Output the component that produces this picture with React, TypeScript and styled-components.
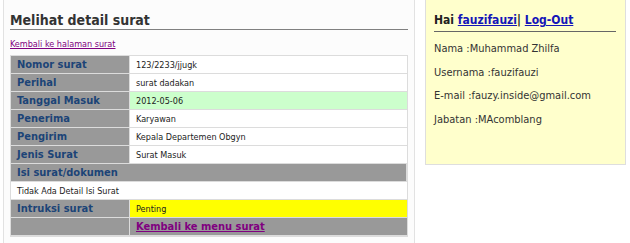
import * as React from 'react';
import styled, { createGlobalStyle } from 'styled-components';

const GlobalStyle = createGlobalStyle`
  html, body {
    margin: 0;
    padding: 0;
    background: #ffffff;
    font-family: "DejaVu Sans Condensed", "DejaVu Sans", sans-serif;
    color: #222;
  }
`;

type Row = { label: string; value: string; tone?: 'plain' | 'green' | 'yellow' };

const topRows: Row[] = [
  { label: 'Nomor surat', value: '123/2233/jjugk' },
  { label: 'Perihal', value: 'surat dadakan' },
  { label: 'Tanggal Masuk', value: '2012-05-06', tone: 'green' },
  { label: 'Penerima', value: 'Karyawan' },
  { label: 'Pengirim', value: 'Kepala Departemen Obgyn' },
  { label: 'Jenis Surat', value: 'Surat Masuk' },
];

const profile = [
  'Nama :Muhammad Zhilfa',
  'Usernama :fauzifauzi',
  'E-mail :fauzy.inside@gmail.com',
  'Jabatan :MAcomblang',
];

function App() {
  return (
    <>
      <GlobalStyle />
      <Page>
        <Main>
          <Title>Melihat detail surat</Title>
          <BackLink href="#">Kembali ke halaman surat</BackLink>
          <DetailTable>
            <tbody>
              {topRows.map((row) => (
                <tr key={row.label}>
                  <LabelCell>{row.label}</LabelCell>
                  <ValueCell $tone={row.tone}>{row.value}</ValueCell>
                </tr>
              ))}
              <tr>
                <LabelCell colSpan={2}>Isi surat/dokumen</LabelCell>
              </tr>
              <tr>
                <ValueCell colSpan={2}>Tidak Ada Detail Isi Surat</ValueCell>
              </tr>
              <tr>
                <LabelCell>Intruksi surat</LabelCell>
                <ValueCell $tone="yellow">Penting</ValueCell>
              </tr>
              <tr>
                <LabelCell />
                <ValueCell $tone="gray">
                  <MenuLink href="#">Kembali ke menu surat</MenuLink>
                </ValueCell>
              </tr>
            </tbody>
          </DetailTable>
        </Main>
        <Sidebar>
          <Greeting>
            Hai <UserLink href="#">fauzifauzi</UserLink>| <UserLink href="#">Log-Out</UserLink>
          </Greeting>
          <InfoList>
            {profile.map((line) => (
              <InfoItem key={line}>{line}</InfoItem>
            ))}
          </InfoList>
        </Sidebar>
      </Page>
    </>
  );
}

const Page = styled.div`
  display: flex;
  align-items: flex-start;
  width: 630px;
  height: 243px;
  overflow: hidden;
`;

const Main = styled.div`
  box-sizing: border-box;
  width: 412px;
  height: 243px;
  margin-left: 3px;
  padding: 12px 6px 0;
  background: #fcfcfc;
  border-left: 1px solid #e2e2e2;
  border-right: 1px solid #e2e2e2;
`;

const Title = styled.h2`
  margin: 0;
  padding-bottom: 0;
  font-size: 14px;
  line-height: 17px;
  font-weight: bold;
  color: #333;
  border-bottom: 1px solid #808080;
`;

const BackLink = styled.a`
  display: block;
  margin-top: 8px;
  font-size: 9px;
  line-height: 12px;
  color: #800080;
  text-decoration: underline;
`;

const DetailTable = styled.table`
  width: 100%;
  margin-top: 5px;
  border-collapse: separate;
  border-spacing: 0;
  background: #dcdcdc;
  border: 1px solid #dcdcdc;

  td {
    height: 17px;
    padding: 0 0 0 6px;
    border-bottom: 1px solid #dcdcdc;
  }
`;

const LabelCell = styled.td`
  width: 112px;
  background: #999999;
  color: #1c4477;
  font-size: 11px;
  font-weight: bold;
  border-right: 1px solid #dcdcdc;
`;

const toneColours = {
  plain: '#ffffff',
  green: '#ccffcc',
  yellow: '#ffff00',
  gray: '#999999',
};

const ValueCell = styled.td<{ $tone?: keyof typeof toneColours }>`
  background: ${(p) => toneColours[p.$tone ?? 'plain']};
  color: #222;
  font-size: 9px;
`;

const MenuLink = styled.a`
  font-size: 11px;
  font-weight: bold;
  color: #800080;
  text-decoration: underline;
`;

const Sidebar = styled.div`
  box-sizing: border-box;
  width: 201px;
  height: 165px;
  margin-left: 10px;
  padding: 12px 9px 0 8px;
  background: #ffffcc;
  border: 1px solid #dedede;
  border-top: none;
`;

const Greeting = styled.div`
  padding-bottom: 3px;
  font-size: 12px;
  line-height: 16px;
  font-weight: bold;
  color: #222;
  border-bottom: 1px solid #666;
`;

const UserLink = styled.a`
  color: #1515b8;
  text-decoration: underline;
`;

const InfoList = styled.div`
  display: flex;
  flex-direction: column;
  gap: 10px;
  margin-top: 10px;
`;

const InfoItem = styled.div`
  font-size: 11px;
  line-height: 13.5px;
  color: #333;
`;

export default App;
